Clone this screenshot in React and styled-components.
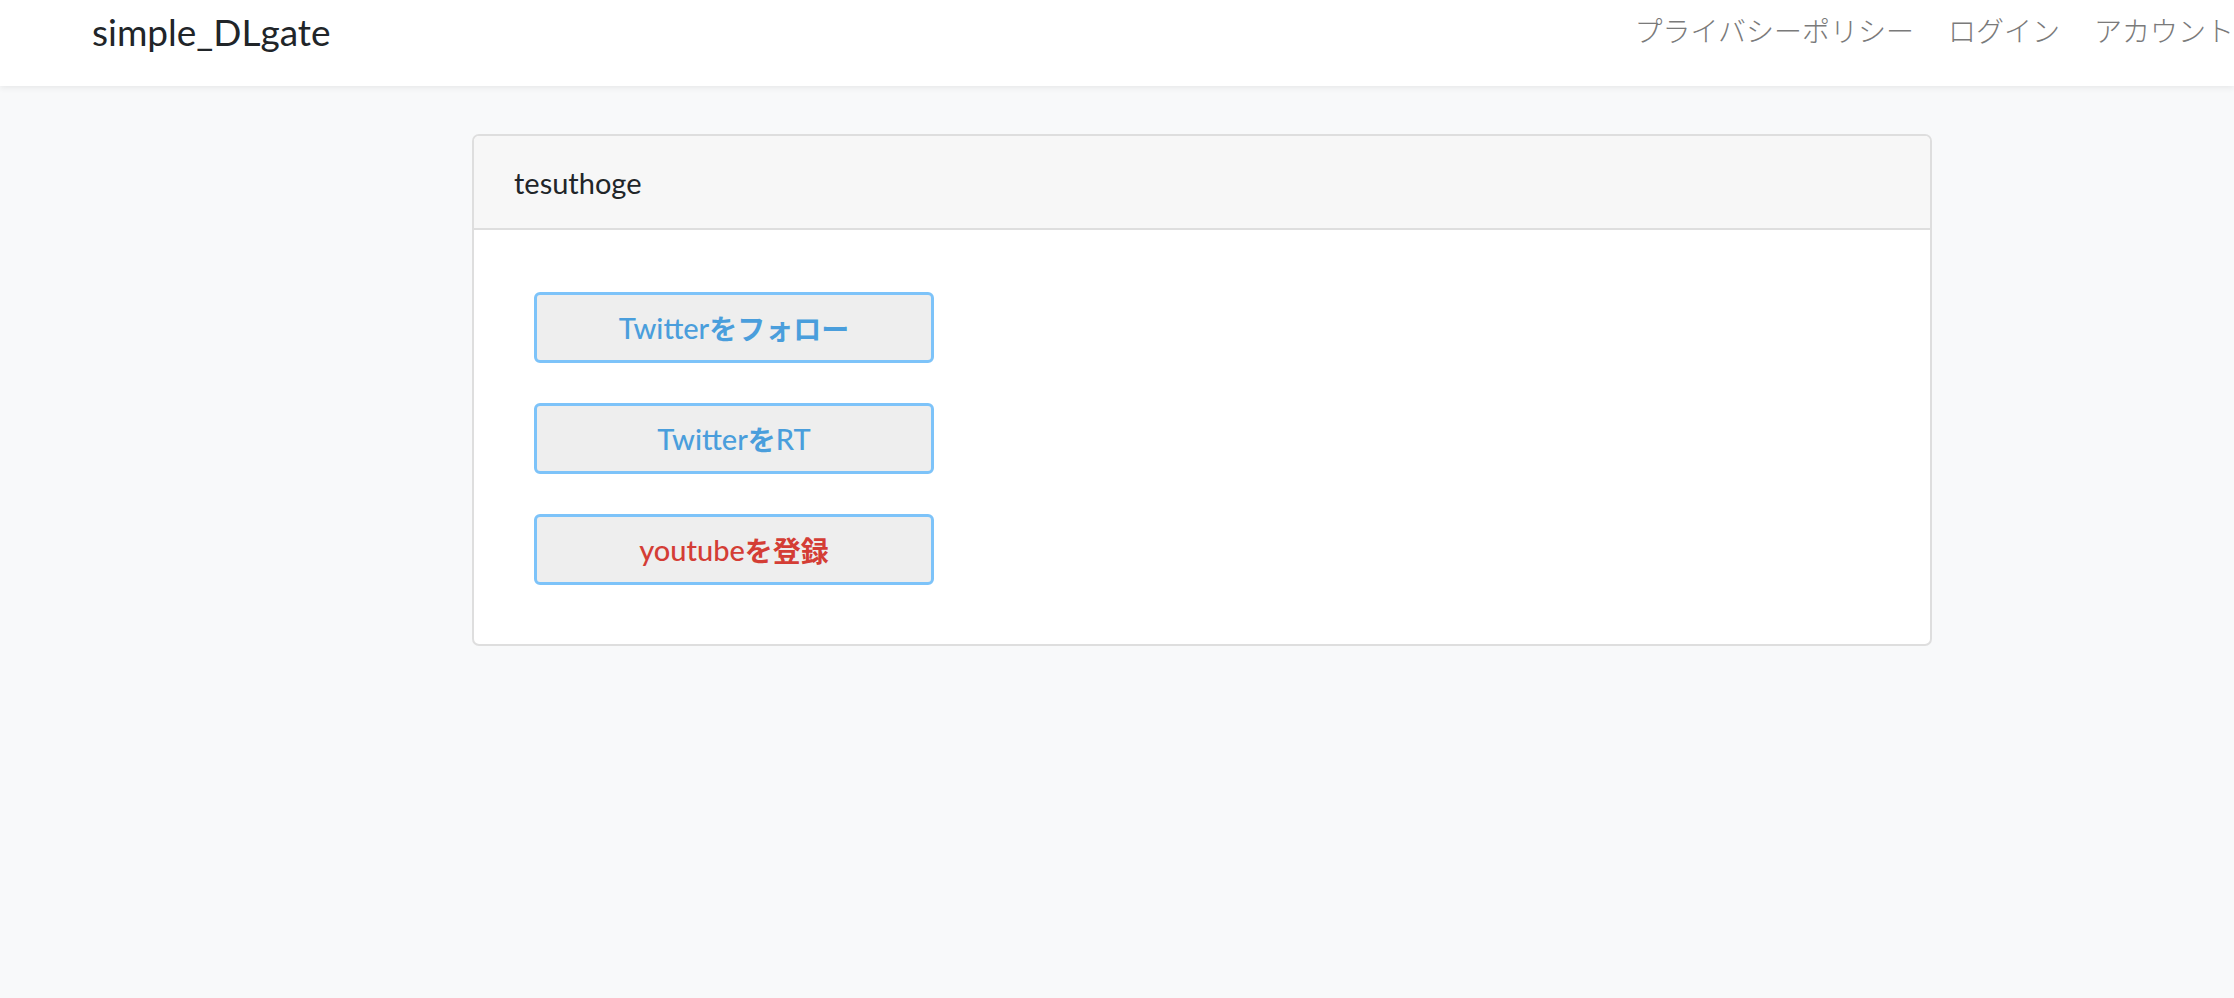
import React from "react";
import styled, { createGlobalStyle } from "styled-components";

const Global = createGlobalStyle`
  html, body {
    margin: 0;
    padding: 0;
    background: #f8f9fa;
    overflow: hidden;
  }
  body {
    font-family: Lato, "Noto Sans CJK JP", sans-serif;
    color: #212529;
    min-height: 998px;
  }
`;

const Page = styled.div`
  min-height: 998px;
  background: #f8f9fa;
`;

const Navbar = styled.header`
  display: flex;
  align-items: center;
  height: 86px;
  padding-left: 92px;
  background: #ffffff;
  box-shadow: 0 2px 6px rgba(0, 0, 0, 0.07);
  position: relative;
  z-index: 1;
  box-sizing: border-box;
`;

const Brand = styled.a`
  font-size: 37px;
  color: #212529;
  text-decoration: none;
  line-height: 1;
  margin-top: -24px;
  font-family: Lato, "Noto Sans CJK JP", sans-serif;
`;

const Nav = styled.nav`
  display: flex;
  align-items: center;
  gap: 34px;
  margin-left: auto;
  margin-top: -26px;
`;

const NavLink = styled.a`
  font-size: 28px;
  color: #7a7a7a;
  text-decoration: none;
  white-space: nowrap;
  font-family: "Noto Sans CJK JP", sans-serif;
  font-weight: 300;
`;

const Main = styled.main`
  padding: 48px 302px 48px 472px;
`;

const Card = styled.section`
  width: 1460px;
  box-sizing: border-box;
  background: #ffffff;
  border: 2px solid #dedede;
  border-radius: 7px;
  overflow: hidden;
`;

const CardHeader = styled.div`
  height: 94px;
  box-sizing: border-box;
  display: flex;
  align-items: center;
  padding: 0 40px;
  background: #f7f7f7;
  border-bottom: 2px solid #dedede;
  font-size: 29px;
  color: #212529;
`;

const CardBody = styled.div`
  display: flex;
  flex-direction: column;
  align-items: flex-start;
  gap: 40px;
  padding: 62px 60px 59px;
`;

const GateButton = styled.button`
  width: 400px;
  height: 71px;
  box-sizing: border-box;
  display: flex;
  align-items: center;
  justify-content: center;
  background: #eeeeee;
  border: 3px solid #7dc3f9;
  border-radius: 6px;
  font-family: Lato, "Noto Sans CJK JP", sans-serif;
  font-size: 29px;
  font-weight: 500;
  color: ${(p) => (p.$tone === "red" ? "#d43d35" : "#4a9edc")};
  cursor: pointer;
  padding: 0;
`;

const Kana = styled.span`
  font-family: "Noto Sans CJK JP", sans-serif;
  font-weight: 700;
  font-size: 28px;
`;

export default function App() {
  return (
    <Page>
      <Global />
      <Navbar>
        <Brand href="#">simple_DLgate</Brand>
        <Nav>
          <NavLink href="#">プライバシーポリシー</NavLink>
          <NavLink href="#">ログイン</NavLink>
          <NavLink href="#">アカウント</NavLink>
        </Nav>
      </Navbar>
      <Main>
        <Card>
          <CardHeader>tesuthoge</CardHeader>
          <CardBody>
            <GateButton $tone="blue">
              Twitter<Kana>をフォロー</Kana>
            </GateButton>
            <GateButton $tone="blue">
              Twitter<Kana>を</Kana>RT
            </GateButton>
            <GateButton $tone="red">
              youtube<Kana>を登録</Kana>
            </GateButton>
          </CardBody>
        </Card>
      </Main>
    </Page>
  );
}
